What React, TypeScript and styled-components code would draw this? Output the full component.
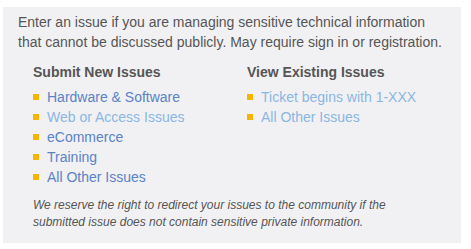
import React from 'react';
import styled, { createGlobalStyle } from 'styled-components';

const GlobalStyle = createGlobalStyle`
  body {
    margin: 0;
    background: #fff;
    font-family: 'Liberation Sans', Arial, sans-serif;
  }
`;

const Panel = styled.div`
  margin: 7px 10px 7px 3px;
  padding: 5px 15px 12px 15px;
  background: #f1f1f3;
  color: #555;
`;

const Intro = styled.p`
  margin: 0;
  font-size: 14px;
  line-height: 20px;
`;

const Columns = styled.div`
  display: grid;
  grid-template-columns: 214px 1fr;
  padding-left: 15px;
  margin-top: 10px;
`;

const Heading = styled.h3`
  margin: 0 0 5px;
  font-size: 14px;
  line-height: 20px;
  font-weight: bold;
  color: #555;
`;

const List = styled.ul`
  list-style: none;
  margin: 0;
  padding: 0;
`;

const Item = styled.li`
  display: flex;
  align-items: center;
  height: 20px;
  font-size: 14px;
  &::before {
    content: '';
    width: 6px;
    height: 6px;
    margin-right: 8px;
    background: #f7b500;
  }
`;

const Link = styled.a<{ $visited?: boolean }>`
  color: ${({ $visited }) => ($visited ? '#8ab6e2' : '#5a82c6')};
  text-decoration: none;
`;

const Note = styled.p`
  margin: 10px 0 0;
  padding-left: 15px;
  max-width: 360px;
  font-size: 12px;
  line-height: 17px;
  font-style: italic;
  color: #555;
`;

const submit = [
  { label: 'Hardware & Software', visited: false },
  { label: 'Web or Access Issues', visited: true },
  { label: 'eCommerce', visited: false },
  { label: 'Training', visited: false },
  { label: 'All Other Issues', visited: false },
];

const view = [
  { label: 'Ticket begins with 1-XXX', visited: true },
  { label: 'All Other Issues', visited: true },
];

export default function App() {
  return (
    <>
      <GlobalStyle />
      <Panel>
        <Intro>
          Enter an issue if you are managing sensitive technical information that cannot be
          discussed publicly. May require sign in or registration.
        </Intro>
        <Columns>
          <div>
            <Heading>Submit New Issues</Heading>
            <List>
              {submit.map((l) => (
                <Item key={l.label}>
                  <Link href="#" $visited={l.visited}>{l.label}</Link>
                </Item>
              ))}
            </List>
          </div>
          <div>
            <Heading>View Existing Issues</Heading>
            <List>
              {view.map((l) => (
                <Item key={l.label}>
                  <Link href="#" $visited={l.visited}>{l.label}</Link>
                </Item>
              ))}
            </List>
          </div>
        </Columns>
        <Note>
          We reserve the right to redirect your issues to the community if the submitted issue
          does not contain sensitive private information.
        </Note>
      </Panel>
    </>
  );
}
